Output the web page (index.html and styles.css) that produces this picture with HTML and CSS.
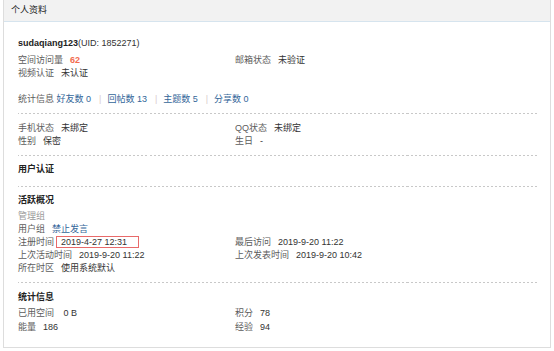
FILE: index.html
```html
<!DOCTYPE html>
<html lang="zh-CN">
<head>
  <meta charset="UTF-8">
  <title>个人资料</title>
  <meta name="viewport" content="width=device-width, initial-scale=1.0">
  <link rel="stylesheet" href="styles.css">
</head>
<body>
  <div class="panel">
    <div class="panel-head">个人资料</div>
    <div class="panel-body">
      <div class="section first">
        <h2 class="uname"><b>sudaqiang123</b>(UID: 1852271)</h2>
        <ul class="pf-list">
          <li><em>空间访问量</em><strong class="hot">62</strong></li>
          <li><em>邮箱状态</em>未验证</li>
          <li><em>视频认证</em>未认证</li>
          <li></li>
        </ul>
        <p class="counts">
          <em>统计信息</em>
          <a href="#">好友数 0</a><span class="pipe">|</span><a href="#">回帖数 13</a><span class="pipe">|</span><a href="#">主题数 5</a><span class="pipe">|</span><a href="#">分享数 0</a>
        </p>
      </div>

      <div class="section">
        <ul class="pf-list">
          <li><em>手机状态</em>未绑定</li>
          <li><em>QQ状态</em>未绑定</li>
          <li><em>性别</em>保密</li>
          <li><em>生日</em>-</li>
        </ul>
      </div>

      <div class="section">
        <h2>用户认证</h2>
      </div>

      <div class="section active">
        <h2>活跃概况</h2>
        <ul class="pf-list single">
          <li><em class="muted">管理组</em></li>
          <li><em>用户组</em><a href="#">禁止发言</a></li>
        </ul>
        <ul class="pf-list">
          <li><em>注册时间</em><span class="marked">2019-4-27 12:31</span></li>
          <li><em>最后访问</em>2019-9-20 11:22</li>
          <li><em>上次活动时间</em>2019-9-20 11:22</li>
          <li><em>上次发表时间</em>2019-9-20 10:42</li>
          <li><em>所在时区</em>使用系统默认</li>
          <li></li>
        </ul>
      </div>

      <div class="section last">
        <h2>统计信息</h2>
        <ul class="pf-list">
          <li><em>已用空间</em>&nbsp;0 B</li>
          <li><em>积分</em>78</li>
          <li><em>能量</em>186</li>
          <li><em>经验</em>94</li>
        </ul>
      </div>
    </div>
  </div>
</body>
</html>
```

FILE: styles.css
```css
body {
  margin: 0;
  padding: 0;
  background: #fff;
  font-family: "Liberation Sans", "Noto Sans CJK SC", sans-serif;
  font-size: 9px;
  line-height: 13.5px;
  color: #333;
}
ul, p, h2 {
  margin: 0;
  padding: 0;
}
ul {
  list-style: none;
}
em {
  font-style: normal;
}
a {
  color: #369;
  text-decoration: none;
}
.panel {
  margin: -1px 3px 0 3px;
  border: 1px solid #ddd;
  background: #fff;
}
.panel-head {
  height: 21px;
  line-height: 21px;
  padding-left: 7px;
  background: #f2f2f2;
  border-bottom: 1px solid #d6e4ee;
  color: #222;
}
.panel-body {
  padding: 0 12px 0 14px;
}
.section {
  padding: 7.5px 0 6px;
  border-bottom: 1px solid #ccc;
  border-image: repeating-linear-gradient(to right, #c8c8c8 0 2px, transparent 2px 4px) 1;
}
.section.first {
  padding: 15px 0 6.5px;
}
.section.active {
  line-height: 13px;
  padding-bottom: 6.5px;
}
.section.last {
  border-bottom: none;
  padding: 8px 0 12.5px;
}
.section h2 {
  font-size: 9px;
  font-weight: bold;
  color: #222;
  margin-bottom: 3px;
}
.section h2.uname {
  font-weight: normal;
  color: #333;
}
.uname b {
  font-weight: bold;
  color: #222;
}
.pf-list {
  display: grid;
  grid-template-columns: 217px 1fr;
}
.pf-list.single {
  grid-template-columns: 1fr;
}
.pf-list em {
  color: #5c5c5c;
  margin-right: 7px;
}
.pf-list em.muted {
  color: #999;
}
.hot {
  color: #f26c4f;
  font-weight: bold;
}
.counts {
  margin-top: 12.5px;
}
.counts em {
  color: #5c5c5c;
}
.pipe {
  color: #d9cccc;
  padding: 0 6px 0 8px;
}
.marked {
  position: relative;
}
.marked::after {
  content: "";
  position: absolute;
  left: -5px;
  right: -12px;
  top: -1px;
  bottom: -1px;
  border: 1px solid #e86a6a;
}
```
